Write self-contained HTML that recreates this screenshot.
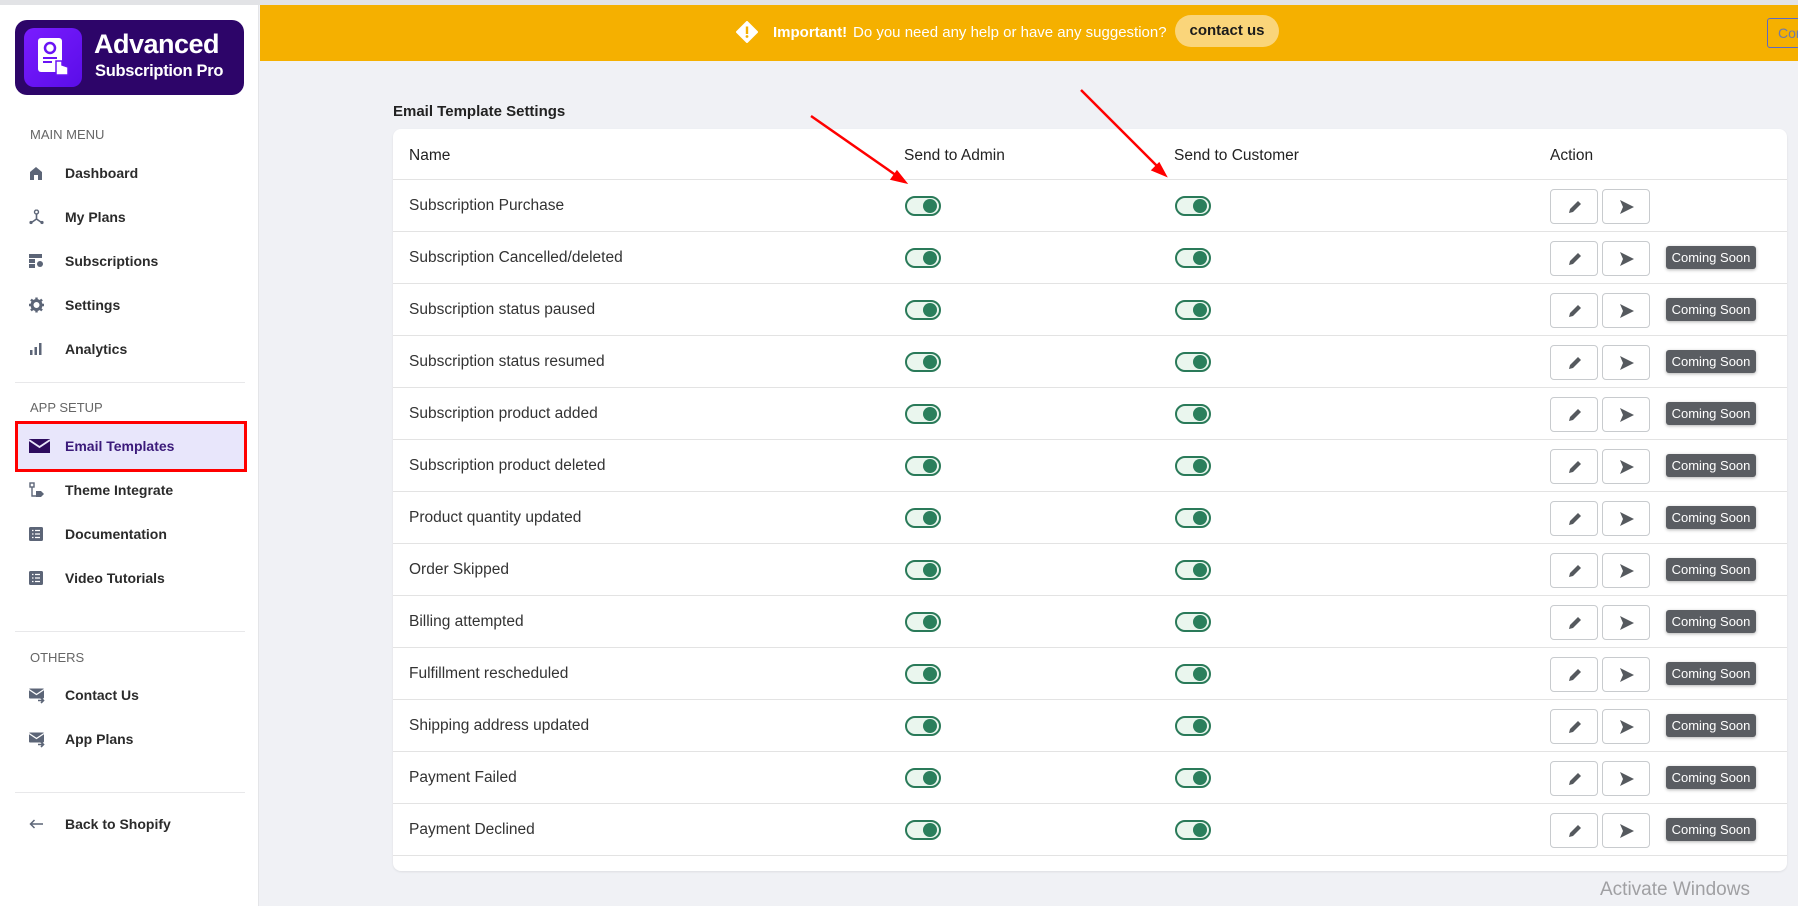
<!DOCTYPE html>
<html><head><meta charset="utf-8">
<style>
*{box-sizing:border-box;margin:0;padding:0}
body{width:1798px;height:906px;overflow:hidden;background:#f0f1f5;font-family:"Liberation Sans",sans-serif;position:relative}
.topline{position:absolute;left:0;top:0;width:1798px;height:5px;background:#e2e3e6}
.side{position:absolute;left:0;top:5px;width:259px;height:901px;background:#fff;border-right:1px solid #e4e5e8}
.logo{position:absolute;left:15px;top:15px;width:229px;height:75px;background:#2d0569;border-radius:12px}
.logo .ic{position:absolute;left:9px;top:8px;width:58px;height:59px;border-radius:10px;background:linear-gradient(135deg,#7a1cff,#5a0de8)}
.logo .t1{position:absolute;left:79px;top:9px;color:#fff;font-size:27px;font-weight:bold;letter-spacing:-0.5px}
.logo .t2{position:absolute;left:80px;top:42px;color:#fff;font-size:16.5px;font-weight:bold;letter-spacing:-0.3px}
.sec{position:absolute;left:30px;font-size:13px;color:#666;}
.mi{position:absolute;left:65px;font-size:14px;color:#2b2b2b;font-weight:bold;transform:translateY(-50%)}
.icn{position:absolute;left:29px;transform:translateY(-50%)}
.div{position:absolute;left:15px;width:230px;height:1px;background:#e8e8ea}
.active{position:absolute;left:15px;top:421px;width:232px;height:51px;background:#e8e6fb;border:3px solid #f00}
.banner{position:absolute;left:260px;top:5px;width:1538px;height:56px;background:#f5b000}
.btxt{position:absolute;top:22px;color:#fff;font-size:15px}
.pill{position:absolute;top:10px;width:104px;height:32px;border-radius:16px;background:#fad57a;color:#1b1b1b;font-size:15px;font-weight:bold;text-align:center;line-height:32px}
.cor{position:absolute;width:40px;height:30px;border:1px solid #5c6ac4;border-radius:3px;color:#6f7aa8;font-size:14px;line-height:28px;padding-left:10px}
.title{position:absolute;left:393px;top:103px;font-size:15px;font-weight:bold;color:#222}
.card{position:absolute;left:393px;top:129px;width:1394px;height:742px;background:#fff;border-radius:8px;box-shadow:0 1px 2px rgba(0,0,0,.08)}
.row{position:absolute;left:0;width:1394px;height:52px;border-bottom:1px solid #e3e3e3}
.row .n{position:absolute;left:16px;top:50%;transform:translateY(-50%);font-size:15.5px;color:#333}
.tg{position:absolute;top:16px;width:36px;height:20px;border:2px solid #2a7a59;border-radius:10px;background:#eaf6ee}
.tg:after{content:"";position:absolute;right:2px;top:1px;width:14px;height:14px;border-radius:50%;background:#2a7f5c}
.bt{position:absolute;top:9px;width:48px;height:35px;border:1px solid #c8cbce;border-radius:4px;background:#fff}
.bt svg{position:absolute;left:16px;top:9px}
.cs{position:absolute;left:1273px;top:14px;width:90px;height:23px;background:#5a5d62;color:#fff;font-size:13px;text-align:center;line-height:23px;border-radius:3px;box-shadow:0 1px 3px rgba(0,0,0,.3)}
.hd{position:absolute;top:18px;font-size:15.5px;color:#222}
.aw{position:absolute;left:1600px;top:879px;color:#a0a0a3;font-size:19px}
</style></head><body>
<div class="topline"></div>
<div class="side">
 <div class="logo"><div class="ic">
  <svg width="58" height="59" viewBox="0 0 58 59"><rect x="14" y="10" width="24" height="34" rx="3" fill="#fff"/><circle cx="26" cy="20" r="5" fill="none" stroke="#6a13f5" stroke-width="2.5"/><path d="M19 30h14M19 34h9" stroke="#6a13f5" stroke-width="2"/><path d="M32 33v14h12v-8l-6-2v-4z" fill="#fff" stroke="#6a13f5" stroke-width="1.5"/></svg>
 </div><div class="t1">Advanced</div><div class="t2">Subscription Pro</div></div>
</div>
<div class="sec" style="top:127px">MAIN MENU</div>
<svg class="icn" style="top:173px" width="14" height="14" viewBox="0 0 14 14"><path d="M1 6L7 1l6 5v8H9V9H5v5H1z" fill="#5c6577"/></svg><div class="mi" style="top:173px">Dashboard</div>
<svg class="icn" style="top:217px" width="15" height="15" viewBox="0 0 15 15"><circle cx="7.5" cy="2.5" r="2" fill="none" stroke="#5c6577" stroke-width="1.4"/><path d="M7.5 4.5v5L2.5 13M7.5 9.5l5 3.5" stroke="#5c6577" stroke-width="1.6" fill="none"/><circle cx="2" cy="13" r="1.6" fill="#5c6577"/><circle cx="13" cy="13" r="1.6" fill="#5c6577"/></svg><div class="mi" style="top:217px">My Plans</div>
<svg class="icn" style="top:261px" width="15" height="14" viewBox="0 0 15 14"><rect x="0" y="0" width="13" height="4" fill="#5c6577"/><rect x="0" y="5" width="6" height="4" fill="#5c6577"/><rect x="0" y="10" width="6" height="4" fill="#5c6577"/><circle cx="11" cy="10" r="3" fill="#5c6577"/></svg><div class="mi" style="top:261px">Subscriptions</div>
<svg class="icn" style="top:305px" width="15" height="15" viewBox="0 0 15 15"><circle cx="7.5" cy="7.5" r="4.5" fill="none" stroke="#5c6577" stroke-width="3"/><path d="M7.5 0v3M7.5 12v3M0 7.5h3M12 7.5h3M2 2l2 2M11 11l2 2M13 2l-2 2M2 13l2-2" stroke="#5c6577" stroke-width="2.4"/></svg><div class="mi" style="top:305px">Settings</div>
<svg class="icn" style="top:349px" width="14" height="12" viewBox="0 0 14 12"><rect x="1" y="7" width="2.5" height="5" fill="#5c6577"/><rect x="5.5" y="4" width="2.5" height="8" fill="#5c6577"/><rect x="10" y="0" width="2.5" height="12" fill="#5c6577"/></svg><div class="mi" style="top:349px">Analytics</div>
<div class="div" style="top:382px"></div>
<div class="sec" style="top:400px">APP SETUP</div>
<div class="active"></div>
<svg class="icn" style="top:446px" width="21" height="14" viewBox="0 0 21 14"><rect width="21" height="14" fill="#2d0b5e"/><path d="M0 1l10.5 7L21 1" stroke="#e8e6fb" stroke-width="1.8" fill="none"/></svg><div class="mi" style="top:446px;color:#3b1a7a">Email Templates</div>
<svg class="icn" style="top:490px" width="16" height="16" viewBox="0 0 16 16"><rect x="1" y="1" width="4" height="4" fill="none" stroke="#5c6577" stroke-width="1.4"/><path d="M3 5v9h4" stroke="#5c6577" stroke-width="1.4" fill="none"/><path d="M7 9h5l3 3-3 3H7z" fill="#5c6577"/></svg><div class="mi" style="top:490px">Theme Integrate</div>
<svg class="icn" style="top:534px" width="14" height="14" viewBox="0 0 14 14"><rect width="14" height="14" rx="1.5" fill="#5c6577"/><path d="M3 3.5h1.5M6 3.5h5M3 7h1.5M6 7h5M3 10.5h1.5M6 10.5h5" stroke="#fff" stroke-width="1.3"/></svg><div class="mi" style="top:534px">Documentation</div>
<svg class="icn" style="top:578px" width="14" height="14" viewBox="0 0 14 14"><rect width="14" height="14" rx="1.5" fill="#5c6577"/><path d="M3 3.5h1.5M6 3.5h5M3 7h1.5M6 7h5M3 10.5h1.5M6 10.5h5" stroke="#fff" stroke-width="1.3"/></svg><div class="mi" style="top:578px">Video Tutorials</div>
<div class="div" style="top:631px"></div>
<div class="sec" style="top:650px">OTHERS</div>
<svg class="icn" style="top:696px" width="16" height="15" viewBox="0 0 16 15"><rect width="15" height="10" rx="1" fill="#5c6577"/><path d="M0 1l7.5 5L15 1" stroke="#fff" stroke-width="1.3" fill="none"/><path d="M9 12h5M12 9.5l2.5 2.5-2.5 2.5" stroke="#5c6577" stroke-width="1.6" fill="none"/></svg><div class="mi" style="top:695px">Contact Us</div>
<svg class="icn" style="top:740px" width="16" height="15" viewBox="0 0 16 15"><rect width="15" height="10" rx="1" fill="#5c6577"/><path d="M0 1l7.5 5L15 1" stroke="#fff" stroke-width="1.3" fill="none"/><path d="M9 12h5M12 9.5l2.5 2.5-2.5 2.5" stroke="#5c6577" stroke-width="1.6" fill="none"/></svg><div class="mi" style="top:739px">App Plans</div>
<div class="div" style="top:792px"></div>
<svg class="icn" style="top:824px" width="14" height="10" viewBox="0 0 14 10"><path d="M14 5H2M5.5 1L1.5 5l4 4" stroke="#5c6577" stroke-width="1.5" fill="none"/></svg><div class="mi" style="top:824px">Back to Shopify</div>

<div class="banner">
 <svg style="position:absolute;left:476px;top:16px" width="22" height="22" viewBox="0 0 22 22"><path d="M11 1l10 10-10 10L1 11z" fill="#fff" stroke="#fff" stroke-width="2" stroke-linejoin="round"/><rect x="9.8" y="5.5" width="2.4" height="7.5" fill="#f5b000"/><circle cx="11" cy="15.5" r="1.4" fill="#f5b000"/></svg>
 <div class="btxt" style="left:513px;top:19px;font-weight:bold">Important!</div>
 <div class="btxt" style="left:593px;top:19px">Do you need any help or have any suggestion?</div>
 <div class="pill" style="left:915px">contact us</div>
 <div class="cor" style="left:1507px;top:13px">Cor</div>
</div>

<div class="title">Email Template Settings</div>
<div class="card">
 <div class="row" style="top:0;height:51px"><div class="hd" style="left:16px">Name</div><div class="hd" style="left:511px">Send to Admin</div><div class="hd" style="left:781px">Send to Customer</div><div class="hd" style="left:1157px">Action</div></div>
 <div id="rows"></div>
</div>
<div class="aw">Activate Windows</div>
<svg style="position:absolute;left:0;top:0" width="1798" height="906"><g stroke="#f00" stroke-width="2.5" fill="#f00"><line x1="811" y1="116" x2="900" y2="178"/><path d="M905 182l-13-3 5-7z"/><line x1="1081" y1="90" x2="1161" y2="170"/><path d="M1165 175l-12-5 6-6z"/></g></svg>
<script>
var names=["Subscription Purchase","Subscription Cancelled/deleted","Subscription status paused","Subscription status resumed","Subscription product added","Subscription product deleted","Product quantity updated","Order Skipped","Billing attempted","Fulfillment rescheduled","Shipping address updated","Payment Failed","Payment Declined"];
var h="";
names.forEach(function(n,i){
 h+='<div class="row" style="top:'+(51+i*52)+'px;height:52px"><div class="n">'+n+'</div><div class="tg" style="left:512px"></div><div class="tg" style="left:782px"></div>'+
 '<div class="bt" style="left:1157px"><svg width="16" height="16" viewBox="0 0 16 16"><path d="M2 14l1-4 8-8 3 3-8 8z" fill="#55595e"/></svg></div>'+
 '<div class="bt" style="left:1209px"><svg width="16" height="16" viewBox="0 0 16 16"><path d="M1 1l14 7-14 7 3-7z" fill="#55595e"/></svg></div>'+
 (i>0?'<div class="cs">Coming Soon</div>':'')+'</div>';
});
document.getElementById("rows").outerHTML=h;
</script>
</body></html>
